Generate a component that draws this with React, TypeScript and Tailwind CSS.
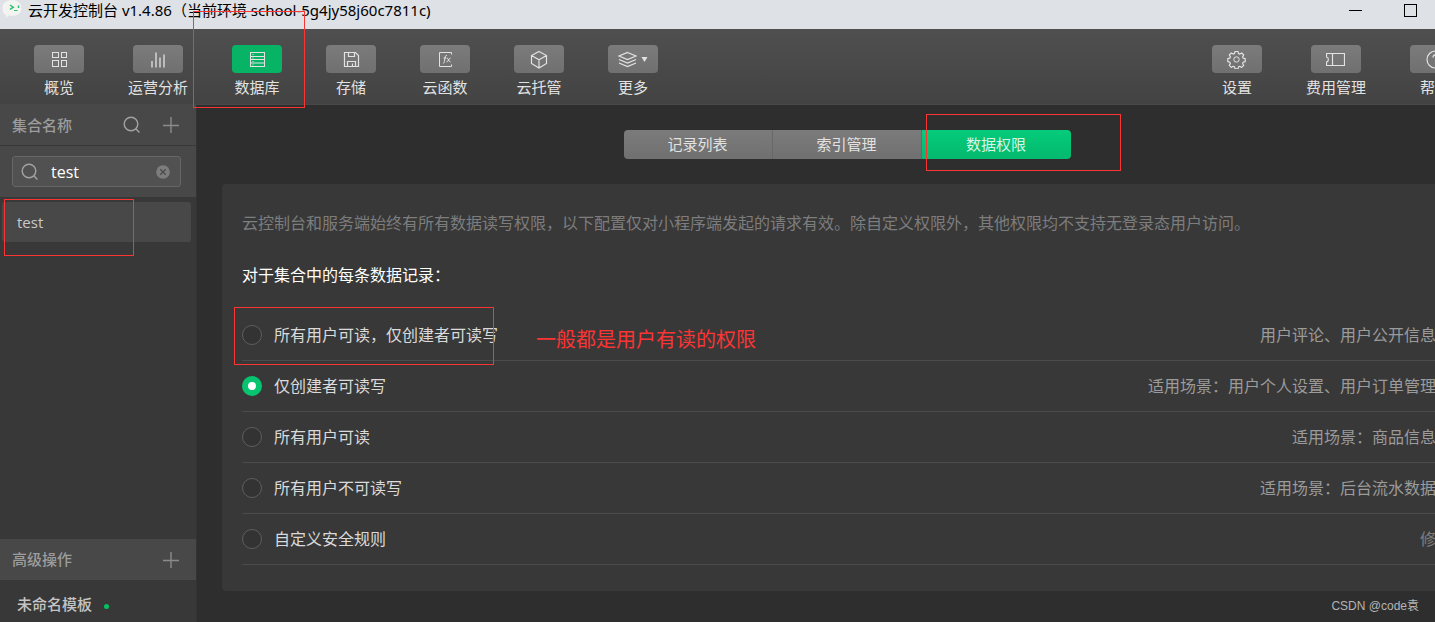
import React, { useState } from 'react';

type IconName = 'grid' | 'bars' | 'db' | 'disk' | 'fx' | 'cube' | 'layers' | 'gear' | 'ticket' | 'help';

const icons: Record<IconName, React.ReactNode> = {
  grid: (
    <>
      <rect x="2.5" y="2.5" width="6" height="5" />
      <rect x="11.5" y="2.5" width="5" height="5" />
      <rect x="2.5" y="10.5" width="6" height="6" />
      <rect x="11.5" y="10.5" width="5" height="6" />
    </>
  ),
  bars: <path d="M3 11v6.500M7 2.500v15M11 7.500v10M15 4.500v13" strokeWidth="1.300" />,
  db: (
    <>
      <rect x="2.5" y="2.5" width="14" height="14" />
      <path d="M2.5 6.5h14M2.5 9.5h14M2.5 13h14" />
      <path d="M4.5 4.5h1M4.5 8h1M4.5 11.5h1M4.5 15h1" />
    </>
  ),
  disk: (
    <>
      <path d="M2.5 2.5h11l3 3v11h-14z" strokeWidth="1.200" />
      <path d="M6.5 2.5v4h6v-4M5.5 16.5v-5h8v5M10.5 13.5v3" strokeWidth="1.200" />
    </>
  ),
  fx: (
    <>
      <path d="M15.5 4.5v-2h-12v14h12v-2" />
      <path d="M11 5.5c-1.600-.3-1.800 1-2 2.500l-.6 3.500c-.2 1.200-.5 1.700-1.400 1.500M7.500 8h3M11 8c1.500 0 1.500 4 3.500 4M14.500 8c-1.500 0-2.500 4-4 4" />
    </>
  ),
  cube: <path d="M9 1.500l7.500 4v8l-7.500 4.500-7.500-4.500v-8zM1.500 5.500l7.500 4.200 7.500-4.200M9 9.700v8.300" strokeWidth="1.200" />,
  layers: <path d="M9.500 2.500l8.500 3.500-8.500 3.500-8.500-3.500zM1 9.500l8.500 3.500 8.500-3.500M1 13l8.500 3.500 8.500-3.500" strokeWidth="1.300" />,
  gear: (
    <>
      <circle cx="9.500" cy="9.500" r="2.700" />
      <path
        d="M8 1.500h3l.5 2 1.300.6 1.900-1.100 2 2-1.100 1.900.6 1.300 2 .5v3l-2 .5-.6 1.300 1.100 1.900-2 2-1.900-1.100-1.300.6-.5 2h-3l-.5-2-1.300-.6-1.900 1.100-2-2 1.100-1.900-.6-1.300-2-.5v-3l2-.5.6-1.300-1.100-1.900 2-2 1.900 1.100 1.300-.6z"
        strokeWidth="1.200"
        strokeLinejoin="round"
      />
    </>
  ),
  ticket: <path d="M.5 3.500h18v12h-18v-3.500c2.500-.5 2.500-4.500 0-5zM6.500 3.500v12" strokeWidth="1.200" />,
  help: (
    <>
      <circle cx="9.500" cy="9.500" r="8.500" strokeWidth="1.200" />
      <path d="M7 7.500c0-3.500 5-3.500 5-.5 0 2-2.500 2-2.500 4.300M9.500 13.200v1.300" strokeWidth="1.200" />
    </>
  ),
};

function Icon({ name }: { name: IconName }) {
  return (
    <svg className="w-[19px] h-[19px] shrink-0" viewBox="0 0 19 19" fill="none" stroke="currentColor" aria-hidden="true">
      {icons[name]}
    </svg>
  );
}

function SearchIcon() {
  return (
    <svg className="w-[18px] h-[18px] shrink-0" viewBox="0 0 18 18" fill="none" stroke="#a3a3a3" strokeWidth="1.400" aria-hidden="true">
      <circle cx="8" cy="8" r="6.800" />
      <path d="M12.800 12.800l3.600 3.700" />
    </svg>
  );
}

function PlusIcon() {
  return (
    <svg className="w-4 h-4 shrink-0" viewBox="0 0 16 16" fill="none" stroke="#8b8b8b" strokeWidth="1.400" aria-hidden="true">
      <path d="M8 0v16M0 8.500h16" />
    </svg>
  );
}

// red marker frame, size and offset come from the caller
function Mark({ className }: { className: string }) {
  return <span className={`absolute z-20 border border-[#fb3434] pointer-events-none ${className}`} />;
}

interface ToolProps {
  icon: IconName;
  label: string;
  active?: boolean;
  caret?: boolean;
}

function Tool({ icon, label, active, caret }: ToolProps) {
  return (
    <button type="button" className="relative shrink-0 flex flex-col items-center gap-1 text-[15px] leading-5 text-[#e2e2e2]">
      <span
        className={`w-[50px] h-7 rounded flex items-center justify-center gap-1 ${
          active ? 'bg-[#07b466]' : 'bg-linear-to-b from-[#7b7b7b] to-[#707070]'
        }`}
      >
        <Icon name={icon} />
        {caret && (
          <svg className="w-[7px] h-[5px]" viewBox="0 0 7 5" fill="currentColor" aria-hidden="true">
            <path d="M.5 0h6l-3 5z" />
          </svg>
        )}
      </span>
      <span className="whitespace-nowrap">{label}</span>
      {active && <Mark className="-left-[39px] -top-[34px] w-28 h-[97px]" />}
    </button>
  );
}

const leftTools: ToolProps[] = [
  { icon: 'grid', label: '概览' },
  { icon: 'bars', label: '运营分析' },
  { icon: 'db', label: '数据库', active: true },
  { icon: 'disk', label: '存储' },
  { icon: 'fx', label: '云函数' },
  { icon: 'cube', label: '云托管' },
  { icon: 'layers', label: '更多', caret: true },
];

const rightTools: ToolProps[] = [
  { icon: 'gear', label: '设置' },
  { icon: 'ticket', label: '费用管理' },
  { icon: 'help', label: '帮助' },
];

const tabs = ['记录列表', '索引管理', '数据权限'];

const rules = [
  { name: '所有用户可读，仅创建者可读写', desc: '用户评论、用户公开信息等' },
  { name: '仅创建者可读写', desc: '适用场景：用户个人设置、用户订单管理等' },
  { name: '所有用户可读', desc: '适用场景：商品信息等' },
  { name: '所有用户不可读写', desc: '适用场景：后台流水数据等' },
  { name: '自定义安全规则', desc: '修改', link: true },
];

function TitleBar() {
  return (
    <header className="h-[29px] shrink-0 bg-[#dee1e6] text-black flex items-start justify-between pr-[18px]">
      <div className="flex items-center gap-1.5 pl-0.5">
        <svg className="w-5 h-5" viewBox="0 0 20 20" aria-hidden="true">
          <path d="M10 0c5.500 0 9.500 3 9.500 8s-4 8-9.500 8c-1.300 0-2.500-.2-3.500-.5L4 18l-.3-2.700C1.500 13.800.5 11.500.5 8 .5 3 4.500 0 10 0z" fill="#f3f3f1" />
          <path d="M8 5l3.300 2.200-3.300 2.200M16.500 5.500v2.500" fill="none" stroke="#2fbf71" strokeWidth="1.500" />
          <path d="M12 10.500h3.500" stroke="#2fbf71" />
        </svg>
        <h1 className="text-[15px] leading-5 whitespace-nowrap font-['Noto_Sans','Noto_Sans_CJK_SC',sans-serif]">
          云开发控制台 v1.4.86（当前环境 school-5g4jy58j60c7811c)
        </h1>
      </div>
      <div className="flex items-start gap-[42px] pt-1">
        <button type="button" aria-label="最小化" className="h-[13px] flex items-center">
          <span className="w-[13px] h-px bg-black" />
        </button>
        <button type="button" aria-label="最大化" className="w-[13px] h-[13px] border border-black" />
      </div>
    </header>
  );
}

function Sidebar() {
  const [keyword, setKeyword] = useState('test');

  return (
    <aside className="w-[197px] shrink-0 bg-[#383838] border-r border-[#323232] flex flex-col text-[15px]">
      <div className="h-[41px] shrink-0 bg-[#484848] border-b border-[#383838] flex items-center pl-3 pr-[17px]">
        <h2 className="flex-1 font-medium text-[#9c9c9c]">集合名称</h2>
        <button type="button" aria-label="搜索" className="mr-[22px]"><SearchIcon /></button>
        <button type="button" aria-label="新建集合"><PlusIcon /></button>
      </div>

      <div className="shrink-0 bg-[#484848] px-3 py-2.5 pr-[15px]">
        <label className="h-[31px] border border-[#666] rounded-[3px] bg-[#515151] flex items-center pl-2 pr-2.5">
          <SearchIcon />
          <input
            aria-label="搜索集合"
            className="min-w-0 flex-1 ml-3 bg-transparent text-base text-white outline-none"
            value={keyword}
            onChange={(e) => setKeyword(e.target.value)}
          />
          <button type="button" aria-label="清空" onClick={() => setKeyword('')}>
            <svg className="w-3.5 h-3.5" viewBox="0 0 14 14" aria-hidden="true">
              <circle cx="7" cy="7" r="6.800" fill="#7d7d7d" />
              <path d="M4.200 4.200l5.600 5.600M9.800 4.200l-5.600 5.600" stroke="#4c4c4c" strokeWidth="1.300" />
            </svg>
          </button>
        </label>
      </div>

      <div className="flex-1 pt-[5px] pl-0.5 pr-[5px]">
        <button type="button" className="relative w-full h-10 rounded-[3px] bg-[#484848] text-[#c9c9c9] text-left px-[15px]">
          test
          <Mark className="left-0.5 -top-[3px] w-[130px] h-[57px]" />
        </button>
      </div>

      <div className="h-[41px] shrink-0 bg-[#484848] flex items-center justify-between pl-3 pr-[17px]">
        <h2 className="font-medium text-[#9c9c9c]">高级操作</h2>
        <button type="button" aria-label="新建模板"><PlusIcon /></button>
      </div>
      <div className="h-[42px] shrink-0 pt-2 pl-[17px]">
        <a href="#template" className="h-8 flex items-center gap-3 font-medium text-[#c4c4c4]">
          未命名模板
          <span className="w-[5px] h-[5px] mt-1 rounded-full bg-[#07c160]" />
        </a>
      </div>
    </aside>
  );
}

function Permissions() {
  const [rule, setRule] = useState(1);

  return (
    <section className="mt-[25px] mx-[25px] rounded bg-[#383838] px-5 pt-[27px] pb-[26px] text-base leading-6">
      <p className="text-[#7d7d7d] whitespace-nowrap">
        云控制台和服务端始终有所有数据读写权限，以下配置仅对小程序端发起的请求有效。除自定义权限外，其他权限均不支持无登录态用户访问。
      </p>
      <h3 className="mt-7 text-white">对于集合中的每条数据记录：</h3>
      <ul className="mt-[23px]">
        {rules.map((r, i) => (
          <li key={r.name} className="relative h-[51px] border-b border-[#4b4b4b] flex items-center justify-between whitespace-nowrap">
            <label className="flex items-center gap-3 text-[#dadada]">
              <input
                type="radio"
                name="rule"
                checked={rule === i}
                onChange={() => setRule(i)}
                className="appearance-none w-5 h-5 rounded-full border border-[#5e5e5e] bg-[#333] checked:border-[6px] checked:border-[#07c471] checked:bg-white"
              />
              {r.name}
            </label>
            {r.link ? (
              <a href="#rule" className="text-[#7d7d7d]">{r.desc}</a>
            ) : (
              <span className="text-[#9b9b9b]">{r.desc}</span>
            )}
            {i === 0 && (
              <>
                <Mark className="-left-2 -top-[3px] w-[260px] h-[58px]" />
                <span className="absolute left-[294px] top-4 text-xl leading-7 text-[#fb3434]">一般都是用户有读的权限</span>
              </>
            )}
          </li>
        ))}
      </ul>
    </section>
  );
}

export default function App() {
  return (
    <div className="relative min-h-screen flex flex-col overflow-hidden bg-[#2e2e2e] font-['Open_Sans','Noto_Sans_CJK_SC',sans-serif]">
      <TitleBar />

      <nav className="h-[76px] shrink-0 pt-4 pl-[34px] flex items-start justify-between bg-linear-to-b from-[#4f4f4f] to-[#434343] border-b border-[#484848]">
        <div className="flex gap-11">
          {leftTools.map((t) => <Tool key={t.label} {...t} />)}
        </div>
        {/* the last tool runs past the window edge */}
        <div className="flex gap-11 -mr-[25px]">
          {rightTools.map((t) => <Tool key={t.label} {...t} />)}
        </div>
      </nav>

      <div className="flex-1 flex">
        <Sidebar />
        <main className="min-w-0 flex-1 -mr-[62px] pt-[25px] pb-[31px]">
          <div className="flex justify-center">
            <div role="tablist" className="relative h-[29px] grid grid-cols-3 text-[15px]">
              {tabs.map((t, i) => (
                <button
                  key={t}
                  type="button"
                  role="tab"
                  aria-selected={i === 2}
                  className={`w-[149px] text-center ${
                    i === 2
                      ? 'relative rounded-r bg-linear-to-b from-[#05cb7b] to-[#04b96d] text-[#d6f5e6]'
                      : 'bg-linear-to-b from-[#7b7b7b] to-[#707070] border-r border-[#686868] text-[#e2e2e2] first:rounded-l'
                  }`}
                >
                  {t}
                  {i === 2 && <Mark className="left-1 -top-4 w-[195px] h-[57px]" />}
                </button>
              ))}
            </div>
          </div>
          <Permissions />
        </main>
      </div>

      <footer className="absolute right-4 bottom-2 text-xs leading-4 text-[#b5b5b5] font-['Liberation_Sans','Noto_Sans_CJK_SC',sans-serif]">
        CSDN @code袁
      </footer>
    </div>
  );
}
